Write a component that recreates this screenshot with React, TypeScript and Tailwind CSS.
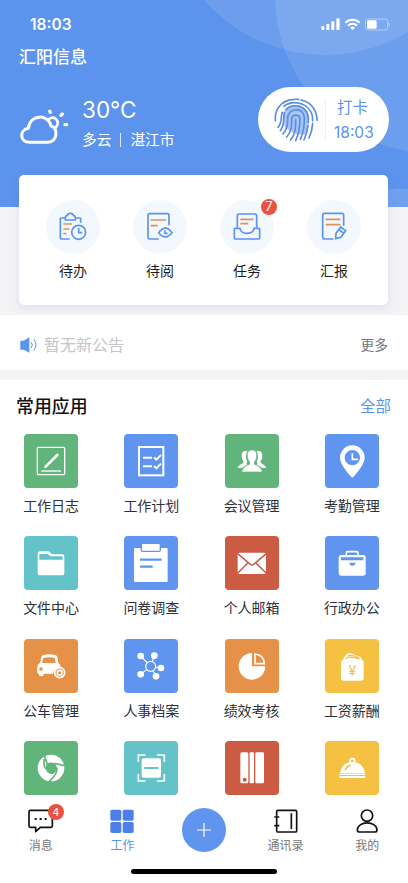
import type { ReactNode } from "react";

const BLUE = "#5c93ec";
const ORANGE = "#dc935a";

function HeaderArt() {
  return (
    <svg className="absolute inset-0" width="408" height="207" viewBox="0 0 408 207">
      <circle cx="432" cy="-4" r="157" fill="#fff" fillOpacity="0.1" />
      <circle cx="325" cy="-105.6" r="160.6" fill="#fff" fillOpacity="0.11" />
      <rect x="360" y="189" width="48" height="18" fill="#fff" fillOpacity="0.12" />
    </svg>
  );
}

function StatusIcons() {
  return (
    <svg width="70" height="13" viewBox="0 0 210 39" fill="#fff">
      <rect x="1" y="25" width="9" height="11" rx="2" />
      <rect x="16" y="18" width="9" height="18" rx="2" />
      <rect x="31" y="10" width="9" height="26" rx="2" />
      <rect x="46" y="1" width="10" height="35" rx="2" />
      <g fill="none" stroke="#fff" strokeWidth="6">
        <path d="M73 14a31 31 0 0 1 43 0" />
        <path d="M81 23a19 19 0 0 1 27 0" />
      </g>
      <path d="M87 29a11 11 0 0 1 15 0l-7.500 7z" />
      <rect x="133" y="3" width="67" height="33" rx="8" fill="none" stroke="#fff" strokeOpacity="0.5" strokeWidth="2.500" />
      <rect x="138" y="7" width="29" height="25" rx="4" />
      <path d="M203 14q7 5 0 11z" fillOpacity="0.6" />
    </svg>
  );
}

function CloudIcon() {
  return (
    <svg width="50" height="38" viewBox="0 0 150 114" fill="none" stroke="#fff" strokeWidth="9" strokeLinecap="round">
      <path d="M29 106c-31 0-31-38-4-42 4-42 59-45 68-7 22 3 21 49-10 49z" strokeLinejoin="round" />
      <path d="M87 36c17-11 36 8 20 26" strokeWidth="8" />
      <path d="M89 13l2 3" strokeWidth="10" />
      <path d="M127 21l-4 4" strokeWidth="10" />
      <path d="M135 53h5" strokeWidth="10" />
    </svg>
  );
}

function Fingerprint() {
  return (
    <svg width="44" height="44" viewBox="0 0 132 132" fill="none" stroke="#5a8ddf" strokeWidth="5" strokeLinecap="round">
      <path d="M29 45C40 12 92 12 102 48c5 26-1 46-9 60-20 6-42-4-62-23z" fill="#a8c4f5" stroke="none" />
      <path d="M4 68v-6C3 39 18 9 54 5q10-2 20-1" />
      <path d="M81 6c31 6 48 31 48 61" />
      <path d="M25 43c-6 13 1 29-13 45" />
      <path d="M29 25C43 14 59 12 73 15c29 7 44 27 43 53" />
      <path d="M116 76c-1 17-5 31-11 44" />
      <path d="M36 35c14-16 41-15 56 0 10 9 12 26 11 39" />
      <path d="M102 83c-2 16-6 29-12 43" />
      <path d="M31 44c-5 18 3 35-12 54" />
      <path d="M27 108c15-18 14-33 14-49 2-31 47-32 50-2 1 26-3 47-12 67" />
      <path d="M38 117c18-21 14-37 15-54 2-16 24-15 25 1 0 22-2 40-13 64" />
      <path d="M50 126c15-19 15-40 15-61" />
    </svg>
  );
}

function TodoIcon() {
  return (
    <>
      <g stroke={BLUE} strokeWidth="5">
        <path d="M58 54H45q-2 0-2 2v58q0 3 3 3h25M88 54h14q2 0 2 2v12" />
        <path d="M58 60v-8q0-4 5-5 2-7 10-7t10 7q5 1 5 5v8z" />
        <circle cx="98" cy="97" r="21" />
        <path d="M98 84v14h11" />
      </g>
      <path d="M52 72h26M52 87h18M52 101h9" stroke={ORANGE} strokeWidth="5" />
    </>
  );
}

function ReadIcon() {
  return (
    <>
      <g stroke={BLUE} strokeWidth="5">
        <path d="M77 117H50q-5 0-5-5V46q0-5 5-5h53q5 0 5 5v30" />
        <path d="M77 98q20-27 40 0-20 25-40 0z" />
        <path d="M96 91v9h8" />
      </g>
      <path d="M53 60h46M53 77h21" stroke={ORANGE} strokeWidth="5" />
    </>
  );
}

function TaskIcon() {
  return (
    <>
      <path d="M52 83V47q0-5 5-5h48q5 0 5 5v36" stroke={BLUE} strokeWidth="5" />
      <path d="M45 85h15c2 20 39 20 42 0h14q3 0 3 3v25q0 4-4 4H47q-4 0-4-4V88q0-3 2-3z" stroke={BLUE} strokeWidth="5" />
      <path d="M61 58h40M61 71h24" stroke={ORANGE} strokeWidth="5" />
    </>
  );
}

function ReportIcon() {
  return (
    <>
      <g stroke={BLUE} strokeWidth="5">
        <path d="M79 117H53q-6 0-6-6V46q0-6 6-6h51q6 0 6 6v31" />
        <path d="M86 116l1-16 14-19 15 11-14 20zM95 88l14 11" />
      </g>
      <path d="M56 58h44M56 74h44" stroke={ORANGE} strokeWidth="5" />
    </>
  );
}

const shortcuts: { label: string; icon: ReactNode; badge?: number }[] = [
  { label: "待办", icon: <TodoIcon /> },
  { label: "待阅", icon: <ReadIcon /> },
  { label: "任务", icon: <TaskIcon />, badge: 7 },
  { label: "汇报", icon: <ReportIcon /> },
];

const GREEN = "bg-[#61b57a]";
const SKY = "bg-[#5f95ee]";
const TEAL = "bg-[#63c3c9]";
const RED = "bg-[#cc5b44]";
const AMBER = "bg-[#e59147]";
const YELLOW = "bg-[#f4c143]";

const apps: { label: string; tone: string; icon: ReactNode }[] = [
  {
    label: "工作日志",
    tone: GREEN,
    icon: (
      <>
        <rect x="40" y="40" width="82" height="82" rx="4" fill="none" stroke="#fff" strokeWidth="4" />
        <path d="M68 95l32-32" stroke="#fff" strokeWidth="8" strokeLinecap="round" />
        <path d="M60 103l3-11 8 7z" />
        <path d="M52 111h59" stroke="#fff" strokeWidth="4" />
      </>
    ),
  },
  {
    label: "工作计划",
    tone: SKY,
    icon: (
      <g fill="none" stroke="#fff" strokeWidth="6">
        <rect x="45" y="39" width="73" height="85" />
        <path d="M57 71h27M57 97h27M90 70l7 7 14-14M90 96l7 7 14-14" />
      </g>
    ),
  },
  {
    label: "会议管理",
    tone: GREEN,
    icon: (
      <>
        <path d="M67 52c-12-4-18 4-17 15q0 10 6 16c1 7-16 9-18 19h12q6-6 17-9-4-5 0-9-8-16 0-32zM95 52c12-4 18 4 17 15q0 10-6 16c1 7 16 9 18 19h-12q-6-6-17-9 4-5 0-9 8-16 0-32z" />
        <path d="M81 48c12 0 15 9 14 20q-1 11-7 16v7q22 7 24 23H50q2-16 24-23v-7q-6-5-7-16c-1-11 2-20 14-20z" stroke="#61b57a" strokeWidth="2" />
      </>
    ),
  },
  {
    label: "考勤管理",
    tone: SKY,
    icon: (
      <>
        <path fillRule="evenodd" d="M82 34a37 37 0 0 0-37 37c0 19 19 40 34 58q3 3 6 0c15-18 34-39 34-58a37 37 0 0 0-37-37zm0 14a23 23 0 1 1 0 46 23 23 0 0 1 0-46z" />
        <path d="M82 58v18h17" fill="none" stroke="#fff" strokeWidth="5" />
      </>
    ),
  },
  {
    label: "文件中心",
    tone: TEAL,
    icon: (
      <path fillRule="evenodd" d="M47 46h27l10 9h31q6 0 6 6v51q0 6-6 6H47q-6 0-6-6V52q0-6 6-6zm1 8q-2 0-2 2v15h70v-8q0-2-2-2H80l-9-7z" />
    ),
  },
  {
    label: "问卷调查",
    tone: SKY,
    icon: (
      <>
        <rect x="30" y="36" width="101" height="102" rx="3" />
        <rect x="52" y="22" width="57" height="24" rx="4" stroke="#5f95ee" strokeWidth="4" />
        <path d="M48 71h65M48 92h38" stroke="#5f95ee" strokeWidth="7" />
      </>
    ),
  },
  {
    label: "个人邮箱",
    tone: RED,
    icon: (
      <>
        <rect x="38" y="50" width="85" height="64" rx="5" />
        <path d="M38 53l38 32q5 5 10 0l38-32M38 112l31-32M124 112L92 80" fill="none" stroke="#cc5b44" strokeWidth="4.500" />
      </>
    ),
  },
  {
    label: "行政办公",
    tone: SKY,
    icon: (
      <>
        <path d="M64 58v-7q0-4 4-4h27q4 0 4 4v7" fill="none" stroke="#fff" strokeWidth="5" />
        <rect x="41" y="57" width="81" height="62" rx="7" />
        <path d="M48 64h67v9H48zM73 80h19q-2 9-10 9t-9-9z" fill="#5f95ee" />
      </>
    ),
  },
  {
    label: "公车管理",
    tone: AMBER,
    icon: (
      <>
        <path fillRule="evenodd" d="M58 48q17-4 36 0 5 1 6 6l3 18q8 5 8 14-19-3-24 18H60q-1 8-8 8t-8-8l-4-3q-3-19 4-26 5-3 6-9 1-16 8-18zm0 8l-4 16h41l-3-16q-17-3-34 0z" />
        <circle cx="51" cy="90" r="5.500" fill="#e59147" />
        <circle cx="107" cy="101" r="15" fill="none" stroke="#fff" strokeWidth="5" />
        <circle cx="107" cy="101" r="7" fill="none" stroke="#fff" strokeWidth="5" />
      </>
    ),
  },
  {
    label: "人事档案",
    tone: SKY,
    icon: (
      <>
        <path d="M50 51l30 31 11-32M111 87L80 82l16 30M50 106l30-24" fill="none" stroke="#fff" strokeWidth="3.500" />
        <circle cx="80" cy="82" r="15" fill="#5f95ee" stroke="#fff" strokeWidth="3.500" />
        <circle cx="50" cy="51" r="10" />
        <circle cx="91" cy="50" r="10" />
        <circle cx="111" cy="87" r="10" />
        <circle cx="96" cy="112" r="10" />
        <circle cx="50" cy="106" r="10" />
      </>
    ),
  },
  {
    label: "绩效考核",
    tone: AMBER,
    icon: (
      <>
        <path d="M81 42v40h40a40 40 0 1 1-40-40z" />
        <path d="M90 45q27 3 28 29H90z" fill="none" stroke="#fff" strokeWidth="5" />
      </>
    ),
  },
  {
    label: "工资薪酬",
    tone: YELLOW,
    icon: (
      <>
        <path d="M55 64q-2-6 3-10l8-9q4-4 10-2l30 11q4 2 4 10" fill="#fff" />
        <path d="M62 60l4-5q20-3 38 6M68 50q17-3 34 7" fill="none" stroke="#f4c143" strokeWidth="3.500" />
        <rect x="48" y="63" width="68" height="62" rx="7" />
        <text x="82" y="110" textAnchor="middle" fontSize="42" fill="#f4c143" fontFamily="Inter, sans-serif">¥</text>
      </>
    ),
  },
  {
    label: "",
    tone: GREEN,
    icon: (
      <>
        <circle cx="81" cy="81" r="40" />
        <path d="M68 68q14-7 27 1l4 11q-3 17-16 20-15-2-18-18z" fill="#61b57a" />
        <path d="M60 42l10 27M121 74L92 67M99 80q2 20-25 43M66 84q-9-9-5-30" fill="none" stroke="#61b57a" strokeWidth="5" />
      </>
    ),
  },
  {
    label: "",
    tone: TEAL,
    icon: (
      <>
        <path d="M43 62V42h22M99 42h22v20M121 99v21H99M65 120H43V99" fill="none" stroke="#fff" strokeWidth="5" />
        <rect x="53" y="52" width="58" height="58" rx="6" />
        <path d="M63 81h38" stroke="#63c3c9" strokeWidth="6" strokeLinecap="round" />
      </>
    ),
  },
  {
    label: "",
    tone: RED,
    icon: (
      <>
        <rect x="46" y="34" width="24" height="93" rx="5" />
        <rect x="74" y="34" width="13" height="93" rx="3" />
        <rect x="91" y="34" width="26" height="93" rx="4" />
        <circle cx="59" cy="116" r="6" fill="#cc5b44" />
      </>
    ),
  },
  {
    label: "",
    tone: YELLOW,
    icon: (
      <>
        <circle cx="82" cy="60" r="7" fill="none" stroke="#fff" strokeWidth="5" />
        <path d="M46 97c1-45 71-45 73 0z" />
        <path d="M43 98h78v4H43zM43 105h78v3q0 3-3 3H46q-3 0-3-3z" />
        <path d="M61 86q4-10 14-13" fill="none" stroke="#f4c143" strokeWidth="5" strokeLinecap="round" />
      </>
    ),
  },
];

function Tab({ label, active, badge, children }: { label: string; active?: boolean; badge?: number; children: ReactNode }) {
  return (
    <div className="flex flex-1 flex-col items-center pt-[12px]">
      <div className="relative">
        <svg width="26" height="26" viewBox="0 0 78 78" fill="none" stroke="#111" strokeWidth="5" strokeLinejoin="round">
          {children}
        </svg>
        {badge !== undefined && (
          <span className="absolute -top-[4px] left-[20px] flex h-4 w-4 items-center justify-center rounded-full bg-[#e75342] text-[11px] text-white">
            {badge}
          </span>
        )}
      </div>
      <span className={active ? "mt-px text-[12px] leading-[22px] text-[#5c93ec]" : "mt-px text-[12px] leading-[22px] text-[#777]"}>{label}</span>
    </div>
  );
}

export default function App() {
  return (
    <div className="relative flex h-[883px] w-[408px] flex-col overflow-hidden bg-[#f3f3f5] font-[Inter,'Noto_Sans_CJK_SC',sans-serif]">
      <header className="relative h-[207px] shrink-0 bg-[#5c93ec] text-white">
        <HeaderArt />
        <div className="relative">
          <div className="flex h-[48px] items-center justify-between pt-[1px] pr-[17px] pl-[30px]">
            <span className="text-[15.500px] font-semibold">18:03</span>
            <StatusIcons />
          </div>
          <div className="pl-[19px] text-[17px] leading-[18px] font-medium">汇阳信息</div>
          <div className="flex pt-[21px] pr-[19px] pl-[20px]">
            <div className="pt-[20px]">
              <CloudIcon />
            </div>
            <div className="ml-[12px]">
              <div className="pt-[8px] text-[22.500px] leading-[29px]">30°C</div>
              <div className="mt-[5px] flex items-center text-[14.700px] leading-[22px]">
                多云
                <span className="mx-[9px] h-[14px] w-px bg-white/80" />
                湛江市
              </div>
            </div>
            <div className="ml-auto flex h-[65px] w-[131px] items-center rounded-full bg-white pl-[16px] text-[#5c93ec]">
              <Fingerprint />
              <span className="ml-[7px] h-[40px] w-px bg-[#eceff5]" />
              <div className="ml-[8px] leading-[23px]">
                <div className="pl-[3px] text-[15.500px]">打卡</div>
                <div className="pt-[2px] text-[15.500px]">18:03</div>
              </div>
            </div>
          </div>
        </div>
      </header>

      <section className="relative mx-[19px] -mt-[32px] mr-[20px] flex h-[130px] shrink-0 rounded-[5px] bg-white px-[10.500px] pt-[25px] shadow-[0_2px_8px_rgba(90,120,220,0.16)]">
        {shortcuts.map((s) => (
          <div key={s.label} className="flex flex-1 flex-col items-center">
            <div className="relative h-[54px] w-[54px] rounded-full bg-[#f3f7fe]">
              <svg width="54" height="54" viewBox="0 0 162 162" fill="none">
                {s.icon}
              </svg>
              {s.badge !== undefined && (
                <span className="absolute -top-[1px] left-[41px] flex h-4 w-4 items-center justify-center rounded-full bg-[#e75342] text-[13px] text-white">
                  {s.badge}
                </span>
              )}
            </div>
            <span className="mt-[6px] text-[14px] leading-[22px] text-[#1c1c1c]">{s.label}</span>
          </div>
        ))}
      </section>

      <section className="mt-[10px] flex h-[55px] shrink-0 items-center bg-white pt-[5px] pr-[20px] pl-[20px]">
        <svg width="18" height="16" viewBox="0 0 54 48" fill="none" stroke={BLUE} strokeWidth="3">
          <path d="M1 11h10L28 1v46L11 38H1z" fill={BLUE} stroke="none" />
          <path d="M33 15q8 9 0 18M41 7q14 16 0 34" />
        </svg>
        <span className="ml-[6px] text-[16px] text-[#c3c5cb]">暂无新公告</span>
        <span className="ml-auto text-[13.700px] text-[#777]">更多</span>
      </section>

      <section className="mt-[10px] flex-1 bg-white">
        <div className="flex h-[53.500px] items-center justify-between pr-[17px] pl-[16px]">
          <h2 className="pt-px text-[17.900px] font-medium text-[#111]">常用应用</h2>
          <span className="text-[15.500px] text-[#5c93ec]">全部</span>
        </div>
        <div className="grid auto-rows-[102.500px] grid-cols-4 pr-[6px] pl-[1px]">
          {apps.map((a, i) => (
            <div key={i} className="flex flex-col items-center">
              <div className={`h-[54px] w-[54px] rounded-[4px] ${a.tone}`}>
                <svg width="54" height="54" viewBox="0 0 162 162" fill="#fff">
                  {a.icon}
                </svg>
              </div>
              <span className="mt-[7px] text-[14px] leading-[22px] text-[#2d2f3a]">{a.label}</span>
            </div>
          ))}
        </div>
      </section>

      <nav className="absolute inset-x-0 bottom-0 flex h-[87px] flex-col bg-white">
        <div className="flex h-[73px]">
          <Tab label="消息" badge={4}>
            <path d="M7 7h62q4 0 4 4v43q0 4-4 4H37L23 71V58H7q-4 0-4-4V11q0-4 4-4z" />
            <path d="M20 33h6M35 33h6M50 33h6" strokeWidth="6" />
          </Tab>
          <Tab label="工作" active>
            <g fill="#4d7feb" stroke="none">
              <rect x="4" y="5" width="33" height="33" rx="5" />
              <rect x="41" y="5" width="33" height="33" rx="5" />
              <rect x="4" y="42" width="33" height="33" rx="5" />
              <rect x="41" y="42" width="33" height="33" rx="5" />
            </g>
          </Tab>
          <div className="flex flex-1 justify-center pt-[12px]">
            <div className="flex h-[44px] w-[44px] items-center justify-center rounded-full bg-[#5f95ee]">
              <svg width="14" height="14" viewBox="0 0 14 14" stroke="#fff" strokeWidth="1.200">
                <path d="M7 0v14M0 7h14" />
              </svg>
            </div>
          </div>
          <Tab label="通讯录">
            <rect x="11" y="7" width="60" height="65" rx="4" />
            <path d="M55 16v47M4 27h15M4 53h15" />
          </Tab>
          <Tab label="我的">
            <circle cx="39" cy="23" r="17" />
            <path d="M17 72q-7 0-7-7c2-27 57-27 59 0q0 7-7 7z" />
          </Tab>
        </div>
        <div className="mx-auto h-[5px] w-[146px] rounded-full bg-black" />
      </nav>
    </div>
  );
}
